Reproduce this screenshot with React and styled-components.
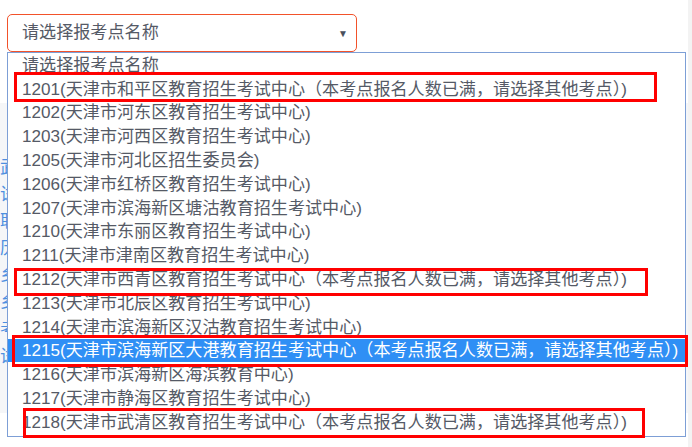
import React from "react";
import styled, { createGlobalStyle } from "styled-components";

const GlobalStyle = createGlobalStyle`
  html, body {
    margin: 0;
    padding: 0;
    background: #ffffff;
  }
  body {
    font-family: "Liberation Sans", "Noto Sans CJK SC", sans-serif;
  }
`;

const FULL = "（本考点报名人数已满，请选择其他考点）";

const options = [
  { text: "请选择报考点名称" },
  { text: `1201(天津市和平区教育招生考试中心${FULL})` },
  { text: "1202(天津市河东区教育招生考试中心)" },
  { text: "1203(天津市河西区教育招生考试中心)" },
  { text: "1205(天津市河北区招生委员会)" },
  { text: "1206(天津市红桥区教育招生考试中心)" },
  { text: "1207(天津市滨海新区塘沽教育招生考试中心)" },
  { text: "1210(天津市东丽区教育招生考试中心)" },
  { text: "1211(天津市津南区教育招生考试中心)" },
  { text: `1212(天津市西青区教育招生考试中心${FULL})` },
  { text: "1213(天津市北辰区教育招生考试中心)" },
  { text: "1214(天津市滨海新区汉沽教育招生考试中心)" },
  { text: `1215(天津市滨海新区大港教育招生考试中心${FULL})`, selected: true },
  { text: "1216(天津市滨海新区海滨教育中心)" },
  { text: "1217(天津市静海区教育招生考试中心)" },
  { text: `1218(天津市武清区教育招生考试中心${FULL})` },
];

// red boxes drawn over the list (hand annotations on the screenshot)
const marks = [
  { left: 6, top: 19, width: 643, height: 30 },
  { left: 6, top: 215, width: 634, height: 28 },
  { left: 4, top: 282, width: 676, height: 32 },
  { left: 15, top: 355, width: 622, height: 30 },
];

// page content lying under the open list, only a sliver shows on the left
const behindChars = ["武", "试", "取", "历", "乡", "乡", "考", "试"];

const Page = styled.div`
  position: relative;
  width: 692px;
  height: 447px;
  overflow: hidden;
`;

const Field = styled.div`
  padding: 14px 0 0 7px;
`;

const SelectBox = styled.div`
  box-sizing: border-box;
  width: 350px;
  height: 38px;
  border: 1px solid #f2522a;
  border-radius: 5px;
  display: flex;
  align-items: center;
  justify-content: space-between;
  padding: 0 8px 0 14px;
  color: #555a66;
  font-size: 17.1px;
  line-height: 1;
`;

const Arrow = styled.span`
  font-size: 10px;
  color: #4a4f5c;
  margin-top: 2px;
`;

const Behind = styled.div`
  margin-top: 51px;
  height: 310px;
  background: #f5f6f8;
  display: flex;
  flex-direction: column;
  gap: 9px;
  padding: 56px 0 0 0;
  box-sizing: border-box;
`;

const BehindText = styled.div`
  color: #4d8fe0;
  font-size: 17px;
  line-height: 18px;
`;

const RightStrip = styled.div`
  position: absolute;
  top: 0;
  right: 0;
  width: 4px;
  height: 447px;
  background: #f3f3f3;
`;

const Dropdown = styled.div`
  position: absolute;
  left: 7px;
  top: 52px;
  width: 679px;
  height: 385px;
  box-sizing: border-box;
  border: 1px solid #7d9fd6;
  background: #ffffff;
  display: flex;
  flex-direction: column;
`;

const Option = styled.div`
  height: 23.8px;
  display: flex;
  align-items: center;
  padding-left: 14px;
  padding-top: 1px;
  box-sizing: border-box;
  font-size: 17.1px;
  line-height: 1;
  white-space: nowrap;
  color: ${({ selected }) => (selected ? "#ffffff" : "#555a66")};
  background: ${({ selected }) => (selected ? "#2f8ff5" : "transparent")};
`;

const Mark = styled.div`
  position: absolute;
  box-sizing: border-box;
  border: 3px solid #ff0000;
  pointer-events: none;
`;

export default function App() {
  return (
    <>
      <GlobalStyle />
      <Page>
        <Field>
          <SelectBox>
            <span>请选择报考点名称</span>
            <Arrow>▼</Arrow>
          </SelectBox>
        </Field>
        <Behind>
          {behindChars.map((c, i) => (
            <BehindText key={i}>{c}</BehindText>
          ))}
        </Behind>
        <RightStrip />
        <Dropdown>
          {options.map((o, i) => (
            <Option key={i} selected={o.selected}>
              {o.text}
            </Option>
          ))}
          {marks.map((m, i) => (
            <Mark
              key={i}
              style={{ left: m.left, top: m.top, width: m.width, height: m.height }}
            />
          ))}
        </Dropdown>
      </Page>
    </>
  );
}
